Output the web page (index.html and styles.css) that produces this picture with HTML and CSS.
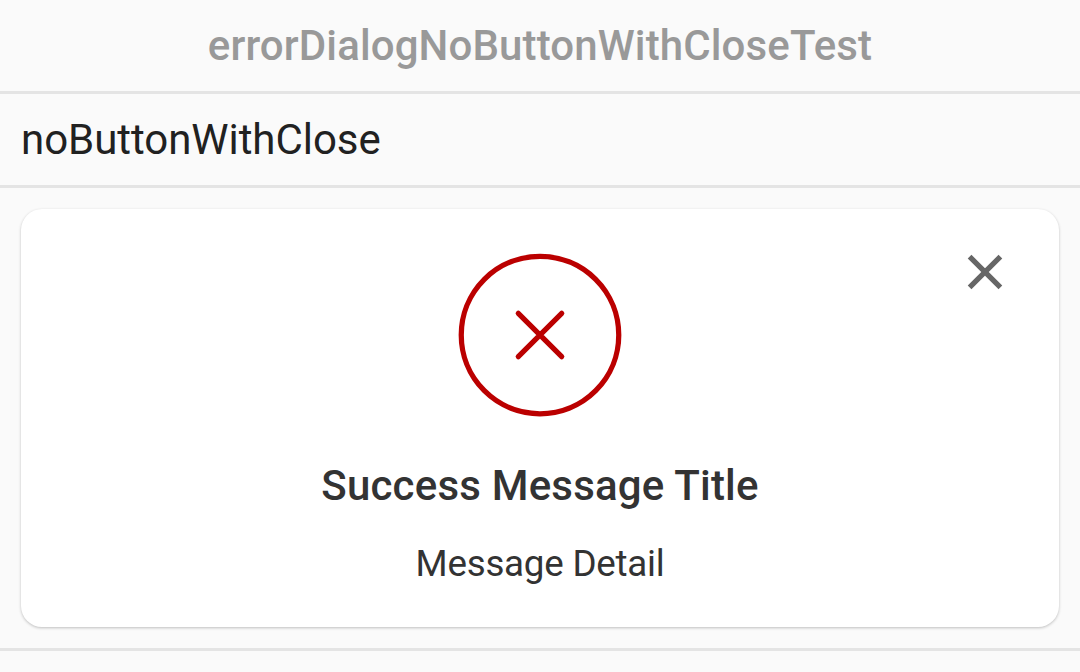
FILE: index.html
```html
<!DOCTYPE html>
<html lang="en">
<head>
<meta charset="utf-8">
<title>errorDialogNoButtonWithCloseTest</title>
<link rel="stylesheet" href="styles.css">
</head>
<body>
<main class="page">
  <h1 class="title">errorDialogNoButtonWithCloseTest</h1>
  <h2 class="label">noButtonWithClose</h2>
  <div class="stage">
    <section class="card">
      <button class="close" aria-label="Close">
        <svg width="36" height="36" viewBox="0 0 36 36"><path d="M2.6 2.6 33.4 33.4M33.4 2.6 2.6 33.4"/></svg>
      </button>
      <svg class="error-icon" width="164" height="164" viewBox="0 0 164 164"><circle cx="82" cy="82" r="78.75"/><path d="M60.3 60.3 103.7 103.7M103.7 60.3 60.3 103.7"/></svg>
      <h3 class="message-title">Success Message Title</h3>
      <p class="message-detail">Message Detail</p>
    </section>
  </div>
</main>
</body>
</html>
```
FILE: styles.css
```css
* { box-sizing: border-box; }
body { margin: 0; background: #fafafa; font-family: Roboto, sans-serif; }
.page { height: 672px; overflow: hidden; }
.title, .label { margin: 0; border-bottom: 3px solid #e4e4e4; font-size: 42px; }
.title { height: 94px; line-height: 91px; text-align: center; font-weight: 500; letter-spacing: .12px; color: #999; }
.label { height: 94px; line-height: 91px; padding-left: 21px; font-weight: 400; letter-spacing: -.05px; color: #212121; }
.stage { height: 463px; padding: 21px; border-bottom: 3px solid #e4e4e4; }
.card { position: relative; height: 418px; padding-top: 44px; display: flex; flex-direction: column; align-items: center; background: #fff; border-radius: 21px; box-shadow: 0 1px 3px rgba(0,0,0,.24); }
.close { position: absolute; top: 45px; right: 56px; width: 36px; height: 36px; padding: 0; border: 0; background: none; }
.close svg { display: block; fill: none; stroke: #666; stroke-width: 5.25; }
.error-icon { flex: none; fill: none; stroke: #b00; stroke-width: 5.25; stroke-linecap: round; }
.message-title { margin: 44px 0 0; font-size: 42px; line-height: 49px; font-weight: 500; letter-spacing: .2px; color: #333; }
.message-detail { margin: 32px 0 0; font-size: 36.75px; line-height: 43px; letter-spacing: -.24px; color: #333; }
```
